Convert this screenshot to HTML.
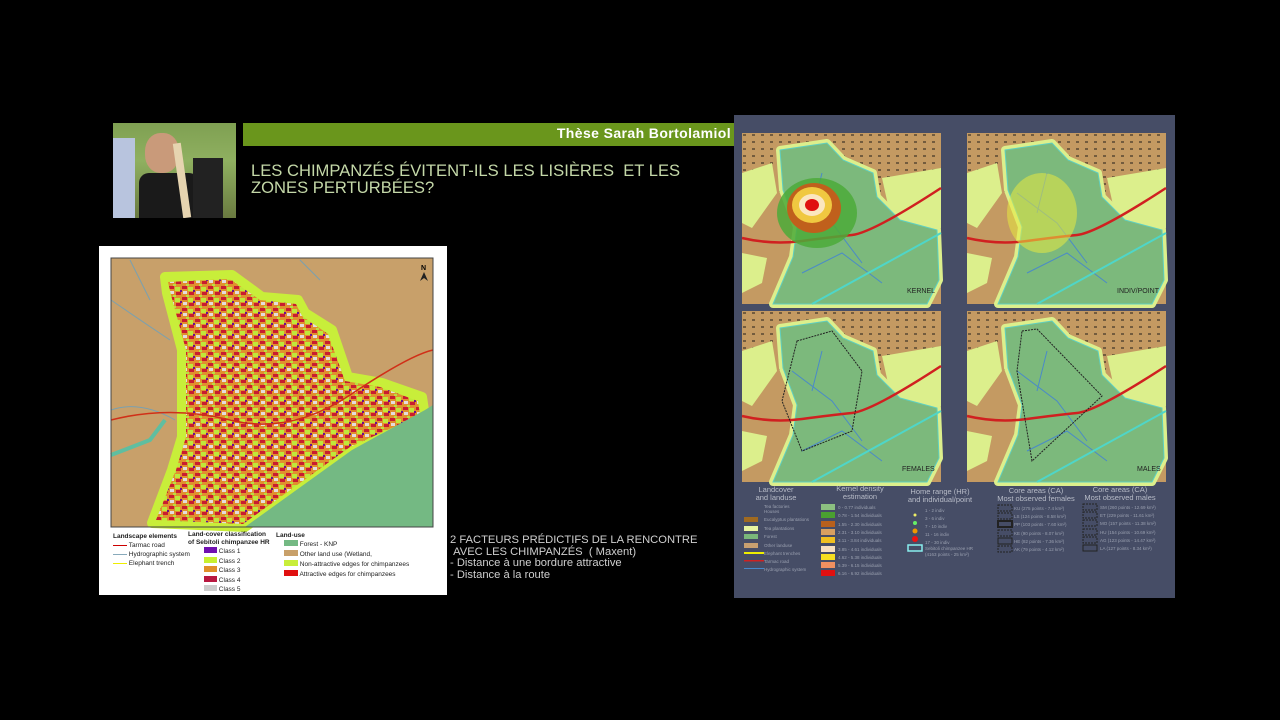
<!DOCTYPE html>
<html><head><meta charset="utf-8"><style>
body{margin:0;width:1280px;height:720px;background:#000;position:relative;overflow:hidden;font-family:"Liberation Sans",sans-serif}
.abs{position:absolute}
</style></head><body>
<!-- photo -->
<div class="abs" style="left:113px;top:123px;width:123px;height:95px;background:linear-gradient(180deg,#7fa052 0%,#8fb060 40%,#6a7a40 100%);overflow:hidden">
 <div class="abs" style="left:0;top:15px;width:22px;height:80px;background:#b8c4de"></div>
 <div class="abs" style="left:32px;top:10px;width:34px;height:40px;border-radius:45%;background:#c99a7a"></div>
 <div class="abs" style="left:26px;top:50px;width:60px;height:45px;background:#1a1a1a;border-radius:10px 10px 0 0"></div>
 <div class="abs" style="left:65px;top:20px;width:8px;height:75px;background:#e6d4b0;transform:rotate(-8deg)"></div>
 <div class="abs" style="left:80px;top:35px;width:30px;height:60px;background:#222"></div>
</div>
<div class="abs" style="left:243px;top:123px;width:491px;height:23px;background:#6a961c"></div>
<div class="abs" style="left:243px;top:125px;width:488px;text-align:right;color:#fff;font-weight:bold;font-size:14px;letter-spacing:.4px">Thèse Sarah Bortolamiol</div>
<div class="abs" style="left:251px;top:162px;color:#c4d8a8;font-size:16.6px;line-height:17px">LES CHIMPANZÉS ÉVITENT-ILS LES LISIÈRES&nbsp; ET LES<br>ZONES PERTURBÉES?</div>

<!-- left panel -->
<div class="abs" style="left:99px;top:246px;width:348px;height:349px;background:#fff"></div>
<svg class="abs" style="left:0;top:0" width="1280" height="720">
<defs>
<pattern id="spk" width="13" height="11" patternUnits="userSpaceOnUse">
<rect width="13" height="11" fill="#e0902e"/><rect x="0" y="0" width="5" height="3" fill="#c81c30"/><rect x="6" y="1" width="5" height="4" fill="#c0e83a"/><rect x="1" y="5" width="4" height="3" fill="#e4dcdc"/><rect x="7" y="6" width="5" height="3" fill="#c81c30"/><rect x="4" y="9" width="3" height="2" fill="#b8e040"/><rect x="11" y="4" width="2" height="2" fill="#6a1090"/>
</pattern>
<pattern id="dots" width="9" height="7" patternUnits="userSpaceOnUse"><rect x="1" y="1" width="3" height="2" fill="#111"/></pattern>
<g id="base">
<rect width="199" height="171" fill="#c49a62"/>
<rect width="199" height="60" fill="url(#dots)" opacity=".45"/>
<polygon points="0,40 30,30 35,60 10,95 0,90" fill="#dcef8c"/>
<polygon points="0,120 25,125 20,150 0,160" fill="#dcef8c"/>
<polygon points="140,45 199,35 199,95 170,110 150,90" fill="#dcef8c"/>
<polygon points="38,17 85,10 101,27 131,40 135,64 158,87 195,97 197,147 185,171 31,171 51,124 55,94 41,57" fill="#dcef8c" stroke="#dcef8c" stroke-width="8" stroke-linejoin="round"/>
<polygon points="38,17 85,10 101,27 131,40 135,64 158,87 195,97 197,147 185,171 31,171 51,124 55,94 41,57" fill="#7cb97c" stroke="#5fd0c0" stroke-width="1"/>
<path d="M50,60 L90,90 L120,130 M60,140 L100,120 L140,150 M80,40 L70,80" stroke="#4a8ac8" stroke-width="1" fill="none"/>
<path d="M0,105 Q30,112 60,108 T110,102 T199,55" stroke="#d02020" stroke-width="2.5" fill="none"/>
<path d="M70,171 L199,100" stroke="#4fd6c8" stroke-width="2" fill="none"/>
</g>
</defs>
<rect x="111" y="258" width="322" height="269" fill="#c8a06a"/>
<path d="M111,300 Q140,320 170,340 M111,410 Q140,400 175,420 M130,260 L150,300 M300,260 L320,280" stroke="#7aa0b0" fill="none"/>
<polygon points="165,277 232,275 262,297 298,300 305,313 332,330 348,377 382,383 422,397 425,417 352,450 245,527 152,523 172,470 182,437 182,350 167,293" fill="#c8ee3a" stroke="#c8ee3a" stroke-width="10" stroke-linejoin="round"/>
<polygon points="168,282 230,279 260,300 296,304 302,316 328,334 345,381 380,387 418,401 420,415 350,447 243,524 156,520 176,470 186,437 186,350 171,295" fill="url(#spk)"/>
<polygon points="425,410 433,405 433,527 245,527 352,450" fill="#74b983"/>
<path d="M111,420 Q170,405 230,420 T350,395 T433,350" stroke="#d03018" stroke-width="1.6" fill="none"/>
<path d="M111,455 L150,440 L165,420" stroke="#5fbea0" stroke-width="4" fill="none"/>
<rect x="111" y="258" width="322" height="269" fill="none" stroke="#444" stroke-width="1"/>
<text x="421" y="270" font-size="7" font-family="Liberation Sans" font-weight="bold">N</text>
<polygon points="424,272 420,281 424,278 428,281" fill="#222"/>
</svg>
<div class="abs" style="left:113px;top:532px;font-size:6.5px;color:#222;line-height:9px">
<b>Landscape elements</b><br><span style="display:inline-block;width:14px;border-top:1.5px solid #c00;vertical-align:middle"></span> Tarmac road<br><span style="display:inline-block;width:14px;border-top:1px solid #8ab;vertical-align:middle"></span> Hydrographic system<br><span style="display:inline-block;width:14px;border-top:1.5px solid #ee0;vertical-align:middle"></span> Elephant trench</div>
<div class="abs" style="left:188px;top:531px;font-size:6.5px;color:#222;line-height:7.5px">
<b>Land-cover classification<br>of Sebitoli chimpanzee HR</b>
<div style="line-height:8.5px;margin-top:1px">
<span style="display:inline-block;width:13px;height:6px;background:#7010b0;margin-left:16px"></span> Class 1<br>
<span style="display:inline-block;width:13px;height:6px;background:#c8f030;margin-left:16px"></span> Class 2<br>
<span style="display:inline-block;width:13px;height:6px;background:#e0902a;margin-left:16px"></span> Class 3<br>
<span style="display:inline-block;width:13px;height:6px;background:#b81840;margin-left:16px"></span> Class 4<br>
<span style="display:inline-block;width:13px;height:6px;background:#ccc;margin-left:16px"></span> Class 5</div></div>
<div class="abs" style="left:276px;top:531px;font-size:6.5px;color:#222;line-height:9px">
<b>Land-use</b><div style="line-height:10px;margin-left:8px">
<span style="display:inline-block;width:14px;height:6px;background:#74b983"></span> Forest - KNP<br>
<span style="display:inline-block;width:14px;height:6px;background:#c8a06a"></span> Other land use (Wetland,<br>
<span style="display:inline-block;width:14px;height:6px;background:#c8ee3a"></span> Non-attractive edges for chimpanzees<br>
<span style="display:inline-block;width:14px;height:6px;background:#e01010"></span> Attractive edges for chimpanzees</div></div>

<div class="abs" style="left:450px;top:535px;color:#cfcfcf;font-size:11.2px;line-height:11.5px">2 FACTEURS PRÉDICTIFS DE LA RENCONTRE<br>&nbsp;AVEC LES CHIMPANZÉS&nbsp; ( Maxent)<br>- Distance à une bordure attractive<br>- Distance à la route</div>

<!-- right panel -->
<div class="abs" style="left:734px;top:115px;width:441px;height:483px;background:#464d66"></div>
<svg class="abs" style="left:0;top:0" width="1280" height="720">
<g transform="translate(742,133)"><use href="#base"/>
<ellipse cx="75" cy="80" rx="40" ry="35" fill="#4caa3a" opacity=".85"/>
<ellipse cx="72" cy="75" rx="27" ry="25" fill="#c0601c"/>
<ellipse cx="70" cy="72" rx="20" ry="18" fill="#f0c840"/>
<ellipse cx="70" cy="72" rx="13" ry="11" fill="#fbe6c0"/>
<ellipse cx="70" cy="72" rx="7" ry="6" fill="#e01010"/>
<text x="165" y="160" font-size="7" fill="#222" font-family="Liberation Sans">KERNEL</text></g>
<g transform="translate(967,133)"><use href="#base"/>
<ellipse cx="75" cy="80" rx="35" ry="40" fill="#e8ea40" opacity=".55"/>
<text x="150" y="160" font-size="7" fill="#222" font-family="Liberation Sans">INDIV/POINT</text></g>
<g transform="translate(742,311)"><use href="#base"/>
<polygon points="55,30 90,20 120,60 110,120 60,140 40,90" fill="none" stroke="#222" stroke-dasharray="2,1"/>
<text x="160" y="160" font-size="7" fill="#222" font-family="Liberation Sans">FEMALES</text></g>
<g transform="translate(967,311)"><use href="#base"/>
<polygon points="55,20 70,18 135,85 65,150 50,60" fill="none" stroke="#222" stroke-dasharray="2,1"/>
<text x="170" y="160" font-size="7" fill="#222" font-family="Liberation Sans">MALES</text></g>
<g font-family="Liberation Sans" fill="#b8bcc8" font-size="7.5" text-anchor="middle">
<text x="776" y="492">Landcover</text><text x="776" y="500">and landuse</text>
<text x="860" y="491">Kernel density</text><text x="860" y="499">estimation</text>
<text x="940" y="494">Home range (HR)</text><text x="940" y="502">and individual/point</text>
<text x="1036" y="493">Core areas (CA)</text><text x="1036" y="501">Most observed females</text>
<text x="1120" y="492">Core areas (CA)</text><text x="1120" y="500">Most observed males</text>
</g>
<g>
<rect x="744" y="517" width="14" height="5" fill="#a06a20"/><rect x="744" y="526" width="14" height="5" fill="#e8f4a0"/><rect x="744" y="534" width="14" height="5" fill="#7ab87a"/><rect x="744" y="543" width="14" height="5" fill="#c8a070"/>
<rect x="744" y="552" width="20" height="2" fill="#ee0"/><rect x="744" y="560" width="20" height="1.5" fill="#c22"/><rect x="744" y="568" width="20" height="1" fill="#48c"/>
<rect x="821" y="504" width="14" height="6" fill="#8cc080"/><rect x="821" y="512" width="14" height="6" fill="#4aa030"/><rect x="821" y="521" width="14" height="6" fill="#b8601c"/><rect x="821" y="529" width="14" height="6" fill="#d8a060"/><rect x="821" y="537" width="14" height="6" fill="#f0c020"/><rect x="821" y="546" width="14" height="6" fill="#f8e0c0"/><rect x="821" y="554" width="14" height="6" fill="#f8e020"/><rect x="821" y="562" width="14" height="6" fill="#f09060"/><rect x="821" y="570" width="14" height="6" fill="#e01010"/>
<circle cx="915" cy="515" r="1.5" fill="#ee6"/><circle cx="915" cy="523" r="2" fill="#6e6"/><circle cx="915" cy="531" r="2.5" fill="#e90"/><circle cx="915" cy="539" r="3" fill="#e11"/>
<rect x="908" y="545" width="14" height="6" fill="none" stroke="#8ee" stroke-width="1.5"/>
</g>
<g font-family="Liberation Sans" fill="#9aa0b0" font-size="4.5">
<text x="764" y="508">Tea factories</text><text x="764" y="513">Houses</text><text x="764" y="521">Eucalyptus plantations</text><text x="764" y="530">Tea plantations</text><text x="764" y="538">Forest</text><text x="764" y="547">Other landuse</text><text x="764" y="555">Elephant trenches</text><text x="764" y="563">Tarmac road</text><text x="764" y="571">Hydrographic system</text>
<text x="838" y="509">0 - 0.77 individuals</text><text x="838" y="517">0.78 - 1.54 individuals</text><text x="838" y="526">1.55 - 2.30 individuals</text><text x="838" y="534">2.31 - 3.10 individuals</text><text x="838" y="542">3.11 - 3.84 individuals</text><text x="838" y="551">3.85 - 4.61 individuals</text><text x="838" y="559">4.62 - 5.38 individuals</text><text x="838" y="567">5.39 - 6.15 individuals</text><text x="838" y="575">6.16 - 6.92 individuals</text>
<text x="925" y="512">1 - 2 indiv</text><text x="925" y="520">3 - 6 indiv</text><text x="925" y="528">7 - 10 indiv</text><text x="925" y="536">11 - 16 indiv</text><text x="925" y="544">17 - 30 indiv</text><text x="925" y="550">Sebitoli chimpanzee HR</text><text x="925" y="556">(4163 points - 25 km²)</text>
<text x="1014" y="510">KU (275 points - 7.4 km²)</text><text x="1014" y="518">LS (124 points - 8.58 km²)</text><text x="1014" y="526">PP (103 points - 7.60 km²)</text><text x="1014" y="535">KE (90 points - 8.07 km²)</text><text x="1014" y="543">HE (82 points - 7.36 km²)</text><text x="1014" y="551">AK (79 points - 4.12 km²)</text>
<text x="1100" y="509">SM (260 points - 12.69 km²)</text><text x="1100" y="517">ET (229 points - 11.61 km²)</text><text x="1100" y="525">MO (157 points - 11.38 km²)</text><text x="1100" y="534">HU (154 points - 10.69 km²)</text><text x="1100" y="542">AG (123 points - 14.47 km²)</text><text x="1100" y="550">LA (127 points - 8.34 km²)</text>
</g>
<g fill="none" stroke="#222" stroke-dasharray="2,1">
<rect x="998" y="505" width="14" height="6"/><rect x="998" y="513" width="14" height="6"/><rect x="998" y="521" width="14" height="6" stroke-width="2" stroke-dasharray="none"/><rect x="998" y="530" width="14" height="6"/><rect x="998" y="538" width="14" height="6" stroke-dasharray="none"/><rect x="998" y="546" width="14" height="6"/>
<rect x="1083" y="504" width="14" height="6"/><rect x="1083" y="512" width="14" height="6"/><rect x="1083" y="520" width="14" height="6"/><rect x="1083" y="529" width="14" height="6"/><rect x="1083" y="537" width="14" height="6"/><rect x="1083" y="545" width="14" height="6" stroke-dasharray="none"/>
</g>
</svg>
</body></html>
